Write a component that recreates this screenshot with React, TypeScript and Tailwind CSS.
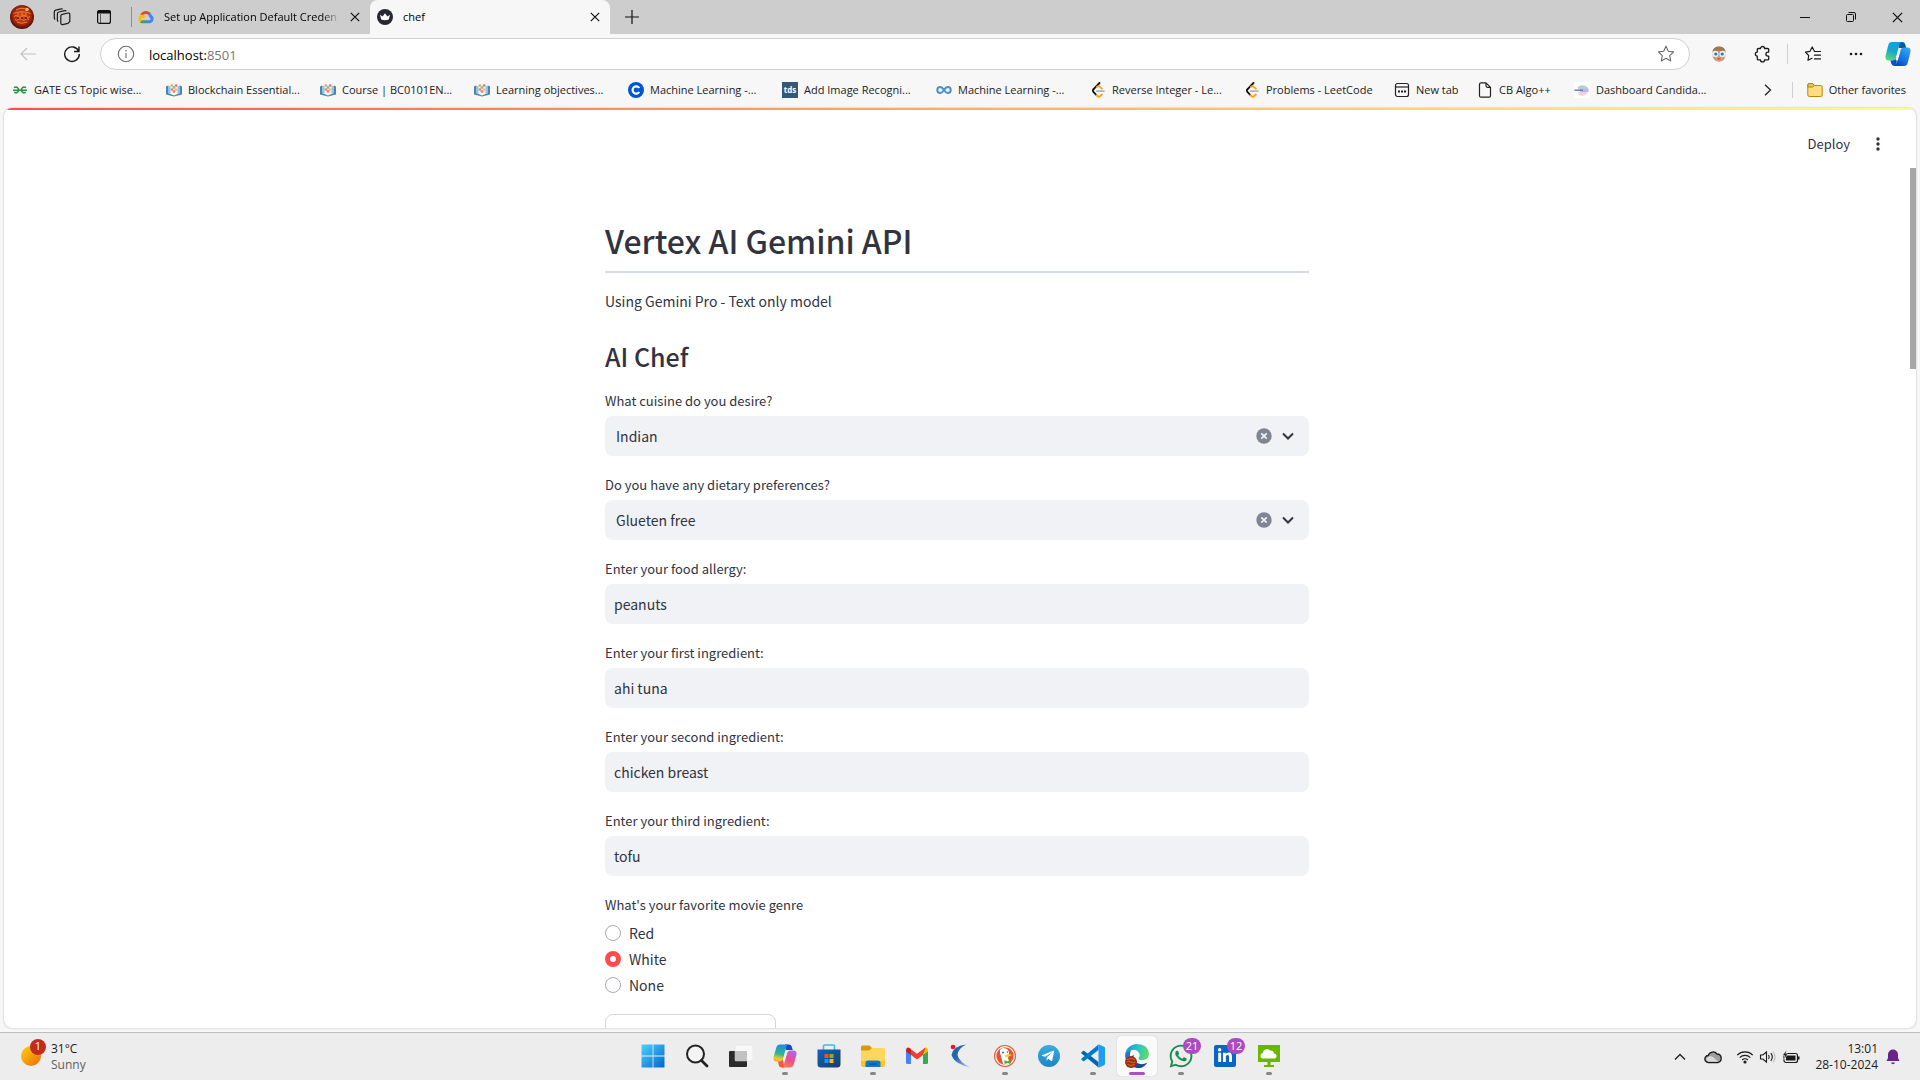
import React from "react";
import { FaWhatsapp, FaTelegramPlane, FaLinkedinIn } from "react-icons/fa";

const chromeFont = "font-['Open_Sans','Noto_Sans',sans-serif]";
const sourceFont = "font-['Noto_Sans_CJK_SC',sans-serif]";

/* ---------- browser glyphs ---------- */

function Avatar() {
  return (
    <svg viewBox="0 0 24 24" className="size-6">
      <defs>
        <radialGradient id="avatar" cx="50%" cy="45%" r="55%">
          <stop offset="0" stopColor="#d8481c" />
          <stop offset="0.65" stopColor="#a82a10" />
          <stop offset="1" stopColor="#4d0a08" />
        </radialGradient>
      </defs>
      <circle cx="12" cy="12" r="12" fill="url(#avatar)" />
      <g fill="none" stroke="#f28a35" strokeWidth="0.9">
        <path d="M6 5q6-3.500 12 0M3.500 8.500q8.500-3.500 17 0" />
        <path d="M4 11.500q2-2 4 0t4 0 4 0 4 0M5 14.500q1.700 1.800 3.500 0t3.500 0 3.500 0 3.500 0" />
        <path d="M8 8v3M12 7.500v3.500M16 8v3M7 17q5 2.500 10 0" />
      </g>
      <g fill="#571006">
        <circle cx="8" cy="13" r="1" />
        <circle cx="12" cy="13" r="1" />
        <circle cx="16" cy="13" r="1" />
      </g>
      <circle cx="17" cy="4.5" r="1.8" fill="#f5b44a" />
    </svg>
  );
}

function WorkspacesIcon() {
  return (
    <svg viewBox="0 0 18 18" className="size-[18px]" fill="none" stroke="#1a1a1a" strokeWidth="1.2" strokeLinejoin="round">
      <path d="M9.2 6.3 15 5a1.5 1.5 0 0 1 1.8 1.2v7.3L15 15.3 9.6 16.6a1.5 1.5 0 0 1-1.8-1.4V8a1.6 1.6 0 0 1 1.4-1.7Z" />
      <path d="M5.2 13.6A1.6 1.6 0 0 1 4.4 12V5.8A1.7 1.7 0 0 1 5.8 4l6-1.4a1.6 1.6 0 0 1 1.5.4" />
      <path d="M2.2 11.4A1.6 1.6 0 0 1 1.3 10V4a1.8 1.8 0 0 1 1.4-1.8L8.2.9a1.6 1.6 0 0 1 1.5.3" />
    </svg>
  );
}

function TabActionsIcon() {
  return (
    <svg viewBox="0 0 14 14" className="size-3.5" fill="none" stroke="#111" strokeWidth="1.2">
      <rect x="0.6" y="0.6" width="12.8" height="12.8" rx="2" />
      <path d="M.6 3V2.4A1.8 1.8 0 0 1 2.4.6h9.2a1.8 1.8 0 0 1 1.8 1.8V3H.6Z" fill="#111" />
      <path d="M3.500 4v9.4" strokeWidth="1" opacity="0.6" />
    </svg>
  );
}

function GoogleCloudIcon() {
  return (
    <svg viewBox="0 0 16 16" className="size-4" fill="none" strokeWidth="3">
      <path d="M3.6 6.2A4.7 4.7 0 0 1 11.4 5" stroke="#ea4335" />
      <path d="M11 4.7a4.6 4.6 0 0 1 1.5 2.6 2.9 2.9 0 0 1-.6 5.4H8" stroke="#4285f4" />
      <path d="M8.2 12.7H4.4a2.9 2.9 0 0 1-1.8-.6" stroke="#34a853" />
      <path d="M3 12.4a3 3 0 0 1 1.4-5.3c1 0 1.700.4 2.4 1.2" stroke="#fbbc05" />
    </svg>
  );
}

function StreamlitCrownIcon() {
  return (
    <svg viewBox="0 0 16 16" className="size-4">
      <circle cx="8" cy="8" r="8" fill="#262730" />
      <path d="M3 5.8 5.6 7.6 8 4.3l2.4 3.3L13 5.8l-1.2 4.8Q8 12 4.2 10.6Z" fill="#fff" />
    </svg>
  );
}

function CloseIcon({ size = "size-2.5" }: { size?: string }) {
  return (
    <svg viewBox="0 0 10 10" className={size} stroke="#111" strokeWidth="1.2">
      <path d="M.8.8 9.2 9.2M9.2.8.8 9.2" />
    </svg>
  );
}

function StarIcon() {
  return (
    <svg viewBox="0 0 18 18" className="size-[18px]" fill="none" stroke="#6b6b6b" strokeWidth="1.1" strokeLinejoin="round">
      <path d="m9 1.3 2.3 4.9 5.3.7-3.900 3.700 1 5.300L9 13.300 4.300 15.900l1-5.300L1.400 6.900l5.300-.7Z" />
    </svg>
  );
}

function MonkeyIcon() {
  return (
    <svg viewBox="0 0 16 16" className="size-4">
      <path d="M8 .5Q14.500.5 15 7.500 14 15.500 8 15.500T1 7.500Q1.500.5 8 .5Z" fill="#c08e68" />
      <path d="M1.500 5.500Q3 .5 8 .5t6.500 5Q8 3.500 1.500 5.500Z" fill="#a3764f" />
      <ellipse cx="8" cy="12.500" rx="4" ry="3" fill="#e09a7c" />
      <circle cx="4.300" cy="8" r="3.300" fill="#e3f0f5" />
      <circle cx="11.700" cy="8" r="3.300" fill="#e3f0f5" />
      <circle cx="4.800" cy="8" r="1.600" fill="#2f7fa3" />
      <circle cx="11.200" cy="8" r="1.600" fill="#2f7fa3" />
      <path d="M6.500 12.800h3" stroke="#a0473c" fill="none" />
    </svg>
  );
}

function ExtensionsIcon() {
  return (
    <svg viewBox="0 0 18 18" className="size-[18px]" fill="none" stroke="#1a1a1a" strokeWidth="1.3" strokeLinejoin="round">
      <path d="M6.500 3.500a2 2 0 0 1 4 0h3.200a1 1 0 0 1 1 1v2.600h-.8a2 2 0 0 0 0 4h.8v2.800a1 1 0 0 1-1 1h-3.200a2 2 0 0 1-4 0H4.300a1 1 0 0 1-1-1v-2.800a2 2 0 0 1 0-4V4.500a1 1 0 0 1 1-1Z" />
    </svg>
  );
}

function FavoritesIcon() {
  return (
    <svg viewBox="0 0 18 18" className="size-[18px]" fill="none" stroke="#1a1a1a" strokeWidth="1.2" strokeLinejoin="round" strokeLinecap="round">
      <path d="M10.500 6.500 8.200 2 6 6.300l-4.600.8L4.700 10.500 4 15.300l4-2" />
      <path d="M11 6.500h5.500M10.500 10.200h6M10.500 13.900h6" />
    </svg>
  );
}

function EdgeCopilotIcon() {
  return (
    <svg viewBox="0 0 24 24" className="size-[26px]">
      <defs>
        <linearGradient id="ecA" x1="0.6" y1="0" x2="0.3" y2="1">
          <stop offset="0" stopColor="#12a0e8" />
          <stop offset="0.5" stopColor="#16a8c8" />
          <stop offset="1" stopColor="#56d878" />
        </linearGradient>
        <linearGradient id="ecB" x1="0.8" y1="0" x2="0.2" y2="1">
          <stop offset="0" stopColor="#2fa8f7" />
          <stop offset="0.6" stopColor="#1671e0" />
          <stop offset="1" stopColor="#0a3fb5" />
        </linearGradient>
      </defs>
      <path d="M12 1h4q2 0 2.600 2l1 3.500H13Z" fill="#0b5a8f" />
      <path d="M6.500 1H16q-2 0-2.600 2L10.500 14q-1 4-4.500 4H3.500Q-.5 18 .7 13L3 4q.8-3 3.500-3Z" fill="url(#ecA)" />
      <path d="M17.500 23H8q2 0 2.600-2l2.900-11q1-4 4.500-4h2.500q4 0 2.800 5L21 20q-.8 3-3.500 3Z" fill="url(#ecB)" />
      <path d="M11 23H8.500q-2 0-2.600-2L5 18h1.500q3 0 4-3.500Z" fill="#0a50c0" />
      <path d="m13.300 8.500-2.500 9" stroke="#f7f7f7" strokeWidth="2.200" />
    </svg>
  );
}

/* ---------- bookmarks ---------- */

function PeopleBookIcon() {
  return (
    <svg viewBox="0 0 16 16" className="size-4 shrink-0">
      <path d="M0 4.500 2 3.500V11l6 2.500V14.500L0 12.500ZM16 4.500l-2-1V11l-6 2.500V14.500l8-2Z" fill="#4a87b0" />
      <path d="M2 3.500 4.500 4.500V12L2 11Z" fill="#8fc3e0" />
      <path d="M14 3.500 11.500 4.500V12l2.500-1Z" fill="#8fc3e0" />
      <circle cx="5.8" cy="3.500" r="1.300" fill="#f0a04b" />
      <circle cx="10.200" cy="3.500" r="1.300" fill="#e8705a" />
      <circle cx="8" cy="5.500" r="1.400" fill="#79c795" />
      <circle cx="6" cy="7.500" r="1.300" fill="#e47a8a" />
      <circle cx="10" cy="7.500" r="1.300" fill="#f2b58e" />
      <circle cx="8" cy="9.500" r="1.400" fill="#e98e58" />
    </svg>
  );
}

function GateIcon() {
  return (
    <svg viewBox="0 0 16 16" className="size-4 shrink-0" fill="none" stroke="#2f8d46" strokeWidth="1.500">
      <path d="M2 5.800A2.800 2.800 0 1 1 2.200 10.200M1 8.300H15M14 5.800A2.800 2.800 0 1 0 13.800 10.200" />
    </svg>
  );
}

function CourseCIcon() {
  return (
    <svg viewBox="0 0 16 16" className="size-4 shrink-0">
      <circle cx="8" cy="8" r="8" fill="#0056d2" />
      <path d="M11.200 10a3.600 3.600 0 1 1 0-4" stroke="#fff" strokeWidth="2.200" fill="none" />
    </svg>
  );
}

function TdsIcon() {
  return (
    <span className="flex size-4 shrink-0 items-center justify-center bg-[#355876] text-[8px] leading-none font-bold text-white">
      tds
    </span>
  );
}

function InfinityIcon() {
  return (
    <svg viewBox="0 0 16 16" className="size-4 shrink-0" fill="none" stroke="#4a8fd0" strokeWidth="2">
      <path d="M8 8C6.500 5.700 5.600 5 4.300 5a3 3 0 0 0 0 6C5.600 11 6.500 10.300 8 8s2.400-3 3.700-3a3 3 0 0 1 0 6C10.400 11 9.500 10.300 8 8Z" />
    </svg>
  );
}

function LeetIcon() {
  return (
    <svg viewBox="0 0 16 16" className="size-4 shrink-0" fill="none" strokeLinecap="round" strokeWidth="1.800">
      <path d="M9.500 1 3.400 7.300" stroke="#111" />
      <path d="M3.400 7.300a1.800 1.800 0 0 0 0 2.600l3 3.200" stroke="#111" />
      <path d="m6.400 13.100.9.900a2.200 2.200 0 0 0 3 0l1.600-1.500M6.900 4.800a2.200 2.200 0 0 1 3 0L11.800 6.700" stroke="#ffa116" />
      <path d="M6.800 9.200h7" stroke="#b3b3b3" />
    </svg>
  );
}

function NewTabIcon() {
  return (
    <svg viewBox="0 0 16 16" className="size-4 shrink-0" fill="none" stroke="#222" strokeWidth="1.200">
      <rect x="1.500" y="1.500" width="13" height="13" rx="2" />
      <path d="M1.500 5h13" />
      <path d="M4 9.500h8" strokeWidth="2" strokeDasharray="2 1" />
    </svg>
  );
}

function PageIcon() {
  return (
    <svg viewBox="0 0 16 16" className="size-4 shrink-0" fill="none" stroke="#222" strokeWidth="1.200" strokeLinejoin="round">
      <path d="M4 .8h5l4.500 4.500v8.400a1.500 1.500 0 0 1-1.500 1.500H4a1.500 1.500 0 0 1-1.500-1.500V2.300A1.500 1.500 0 0 1 4 .8ZM9 .8v3a1.500 1.500 0 0 0 1.500 1.500h3" />
    </svg>
  );
}

function SphereIcon() {
  return (
    <svg viewBox="0 0 16 16" className="size-4 shrink-0">
      <rect width="16" height="16" fill="#fff" />
      <path d="M4 5a6.500 6 0 0 1 10.500 2H4Z" fill="#b5cbd8" />
      <path d="M6 7h8.700a6 6 0 0 1-.5 3H6Z" fill="#c3b4dc" />
      <path d="M4 10h10a6.500 6.500 0 0 1-9 3Z" fill="#f0d0e0" />
      <path d="M0 7.500h9v1.500H1Z" fill="#6d7fa8" />
    </svg>
  );
}

function FolderIcon() {
  return (
    <svg viewBox="0 0 16 16" className="size-4 shrink-0" fill="#ffdc82" stroke="#b8860b" strokeWidth="1">
      <path d="M.8 3A1.500 1.500 0 0 1 2.300 1.500h3.400L7.500 3.500h6.200A1.500 1.500 0 0 1 15.200 5v8a1.500 1.500 0 0 1-1.500 1.500H2.300A1.500 1.500 0 0 1 .8 13Z" />
      <path d="M.8 3A1.500 1.500 0 0 1 2.300 1.500h3.400L7.500 3.500 5.700 5H.8Z" fill="#f0c23c" />
    </svg>
  );
}

const bookmarks = [
  { label: "GATE CS Topic wise...", icon: <GateIcon />, width: "w-[154px]" },
  { label: "Blockchain Essential...", icon: <PeopleBookIcon />, width: "w-[154px]" },
  { label: "Course | BC0101EN...", icon: <PeopleBookIcon />, width: "w-[154px]" },
  { label: "Learning objectives...", icon: <PeopleBookIcon />, width: "w-[154px]" },
  { label: "Machine Learning -...", icon: <CourseCIcon />, width: "w-[154px]" },
  { label: "Add Image Recogni...", icon: <TdsIcon />, width: "w-[154px]" },
  { label: "Machine Learning -...", icon: <InfinityIcon />, width: "w-[154px]" },
  { label: "Reverse Integer - Le...", icon: <LeetIcon />, width: "w-[154px]" },
  { label: "Problems - LeetCode", icon: <LeetIcon />, width: "w-[150px]" },
  { label: "New tab", icon: <NewTabIcon />, width: "w-[83px]" },
  { label: "CB Algo++", icon: <PageIcon />, width: "w-[97px]" },
  { label: "Dashboard Candida...", icon: <SphereIcon />, width: "w-[154px]" },
];

function IconButton({ label, width = "w-11", children }: { label: string; width?: string; children: React.ReactNode }) {
  return (
    <button aria-label={label} className={`flex h-full shrink-0 items-center justify-center ${width}`}>
      {children}
    </button>
  );
}

function TabStrip() {
  return (
    <div className="flex h-[34px] items-center bg-[#cdcdcd] text-[11px] text-black">
      <IconButton label="Profile">
        <Avatar />
      </IconButton>
      <IconButton label="Workspaces" width="w-9">
        <WorkspacesIcon />
      </IconButton>
      <IconButton label="Tab actions" width="w-12">
        <TabActionsIcon />
      </IconButton>
      <div className="ml-[3px] h-5 w-px bg-[#8f8f8f]" />
      <div className="flex h-full w-[238px] items-center gap-2.5 pr-2.5 pl-1.5">
        <GoogleCloudIcon />
        <span className="flex-1 whitespace-nowrap mask-r-from-90%">Set up Application Default Creden</span>
        <button aria-label="Close tab">
          <CloseIcon />
        </button>
      </div>
      <div className="flex h-full w-60 items-center gap-2.5 rounded-t-lg bg-[#f7f7f7] pr-2.5 pl-[7px]">
        <StreamlitCrownIcon />
        <span className="flex-1">chef</span>
        <button aria-label="Close tab">
          <CloseIcon />
        </button>
      </div>
      <IconButton label="New tab">
        <svg viewBox="0 0 14 14" className="size-3.5" stroke="#111" strokeWidth="1.200">
          <path d="M7 0v14M0 7h14" />
        </svg>
      </IconButton>
      <div className="flex-1" />
      <IconButton label="Minimize" width="w-[46px]">
        <svg viewBox="0 0 10 10" className="size-2.5" stroke="#111">
          <path d="M0 5.500h10" />
        </svg>
      </IconButton>
      <IconButton label="Restore" width="w-[46px]">
        <svg viewBox="0 0 10 10" className="size-2.5" stroke="#111" fill="none">
          <rect x="0.500" y="2.500" width="7" height="7" rx="1" />
          <path d="M2.500.5H8A1.500 1.500 0 0 1 9.500 2v5.500" />
        </svg>
      </IconButton>
      <IconButton label="Close" width="w-[46px]">
        <CloseIcon size="size-[11px]" />
      </IconButton>
    </div>
  );
}

function AddressBar() {
  return (
    <div className="flex h-10 items-center">
      <IconButton label="Back" width="ml-1.5 w-11">
        <svg viewBox="0 0 16 14" className="h-3.5 w-4" fill="none" stroke="#c3c3c3" strokeWidth="1.200">
          <path d="M16 7H1M7 1 1 7l6 6" />
        </svg>
      </IconButton>
      <IconButton label="Refresh">
        <svg viewBox="0 0 18 18" className="size-[18px]" fill="none" stroke="#1a1a1a" strokeWidth="1.400">
          <path d="M15.800 6.500A7.300 7.300 0 1 0 16.300 9M16 1.500v5h-5" />
        </svg>
      </IconButton>
      <div className="ml-1.5 flex h-8 flex-1 items-center rounded-full border border-[#d0d0d0] bg-white pr-3.5 pl-4">
        <svg viewBox="0 0 18 18" className="size-[18px]" fill="none" stroke="#6b6b6b" strokeWidth="1.100">
          <circle cx="9" cy="9" r="7.700" />
          <path d="M9 8v5M9 5v1.500" />
        </svg>
        <div className="relative ml-3.5 h-5 flex-1">
          <input aria-label="Address" className="h-5 w-full bg-transparent text-[13px] outline-none" />
          <span className="pointer-events-none absolute inset-x-0 top-px text-[13px] leading-5 text-black">
            localhost:<span className="text-[#767676]">8501</span>
          </span>
        </div>
        <button aria-label="Add to favorites">
          <StarIcon />
        </button>
      </div>
      <div className="ml-[7px] flex h-full items-center">
        <IconButton label="Profile extension">
          <MonkeyIcon />
        </IconButton>
        <IconButton label="Extensions">
          <ExtensionsIcon />
        </IconButton>
        <div className="ml-0.5 h-5 w-px bg-[#cfcfcf]" />
        <IconButton label="Favorites" width="w-[50px]">
          <FavoritesIcon />
        </IconButton>
        <IconButton label="Settings and more" width="w-9">
          <svg viewBox="0 0 14 4" className="h-1 w-3.5" fill="#1a1a1a">
            <circle cx="2" cy="2" r="1.300" />
            <circle cx="7" cy="2" r="1.300" />
            <circle cx="12" cy="2" r="1.300" />
          </svg>
        </IconButton>
        <IconButton label="Copilot" width="ml-0.5 w-11">
          <EdgeCopilotIcon />
        </IconButton>
      </div>
    </div>
  );
}

function BookmarksBar() {
  return (
    <div className="flex h-[34px] items-center pb-0.5 pl-3 text-[11px] whitespace-nowrap text-[#1b1b1b]">
      {bookmarks.map((b, i) => (
        <a key={i} href="#" className={`flex shrink-0 items-center gap-1.5 ${b.width}`}>
          {b.icon}
          <span>{b.label}</span>
        </a>
      ))}
      <div className="flex-1" />
      <button aria-label="More favorites" className="mr-5">
        <svg viewBox="0 0 8 12" className="h-3 w-2" fill="none" stroke="#222" strokeWidth="1.300">
          <path d="m1 .8 5.500 5.200L1 11.200" />
        </svg>
      </button>
      <div className="mr-3.5 h-4 w-px bg-[#cfcfcf]" />
      <a href="#" className="mr-3.5 flex items-center gap-1.5">
        <FolderIcon />
        <span>Other favorites</span>
      </a>
    </div>
  );
}

/* ---------- app page ---------- */

const labelClass = "block h-[25px] text-[13px] leading-5";

function SelectField({ id, label, value, options }: { id: string; label: string; value: string; options: string[] }) {
  return (
    <div className="mb-[19px]">
      <label htmlFor={id} className={labelClass}>
        {label}
      </label>
      <div className="flex h-10 items-center rounded-lg bg-[#f0f2f6] pr-[13px]">
        <select id={id} defaultValue={value} className="h-full flex-1 appearance-none bg-transparent pl-[11px] text-sm outline-none">
          {options.map((o) => (
            <option key={o}>{o}</option>
          ))}
        </select>
        <button aria-label="Clear value" className="mr-2">
          <svg viewBox="0 0 16 16" className="size-4">
            <circle cx="8" cy="8" r="7.700" fill="#808495" />
            <path d="m5.300 5.300 5.400 5.400M10.700 5.300l-5.400 5.400" stroke="#f0f2f6" strokeWidth="1.800" />
          </svg>
        </button>
        <svg viewBox="0 0 16 16" className="size-4" fill="none" stroke="#31333f" strokeWidth="2">
          <path d="m3 5.500 5 5 5-5" />
        </svg>
      </div>
    </div>
  );
}

function TextField({ id, label, value }: { id: string; label: string; value: string }) {
  return (
    <div className="mb-[19px]">
      <label htmlFor={id} className={labelClass}>
        {label}
      </label>
      <input id={id} defaultValue={value} className="block h-10 w-full rounded-lg bg-[#f0f2f6] px-[9px] text-sm outline-none" />
    </div>
  );
}

function AppPage() {
  return (
    <main className={`mx-1 flex min-h-0 flex-1 flex-col overflow-hidden rounded-lg bg-white text-[#31333f] shadow-[0_0_2px_rgba(0,0,0,0.3)] ${sourceFont}`}>
      <div className="h-0.5 shrink-0 bg-linear-to-r from-[#ff4b4b] to-[#fffd80]" />
      <header className="flex h-[58px] shrink-0 items-center justify-end pt-2.5 pr-9 text-[13px]">
        <button className="leading-5">Deploy</button>
        <button aria-label="Main menu" className="ml-[26px]">
          <svg viewBox="0 0 4 14" className="h-3.5 w-1" fill="#31333f">
            <circle cx="2" cy="2" r="1.700" />
            <circle cx="2" cy="7" r="1.700" />
            <circle cx="2" cy="12" r="1.700" />
          </svg>
        </button>
      </header>
      <div className="flex min-h-0 flex-1">
        <div className="min-w-0 flex-1 overflow-hidden">
          <div className="mx-auto max-w-[704px] pt-12">
            <h1 className="border-b-2 border-[#d5dae5] pb-1.5 text-[32px] leading-[49px] font-medium">Vertex AI Gemini API</h1>
            <p className="mt-4 text-sm leading-6">Using Gemini Pro - Text only model</p>
            <h2 className="mt-6 mb-4 text-[25px] leading-[38px] font-medium">AI Chef</h2>
            <SelectField id="cuisine" label="What cuisine do you desire?" value="Indian" options={["Indian", "Italian", "American", "Chinese"]} />
            <SelectField id="diet" label="Do you have any dietary preferences?" value="Glueten free" options={["Glueten free", "Vegan", "Keto", "None"]} />
            <TextField id="allergy" label="Enter your food allergy:" value="peanuts" />
            <TextField id="ing1" label="Enter your first ingredient:" value="ahi tuna" />
            <TextField id="ing2" label="Enter your second ingredient:" value="chicken breast" />
            <TextField id="ing3" label="Enter your third ingredient:" value="tofu" />
            <fieldset>
              <legend className={labelClass}>What's your favorite movie genre</legend>
              {["Red", "White", "None"].map((o) => (
                <label key={o} className="flex h-[26px] items-center gap-2 text-sm">
                  <input
                    type="radio"
                    name="genre"
                    defaultChecked={o === "White"}
                    className="size-4 appearance-none rounded-full border border-[#a9abb3] bg-white checked:border-5 checked:border-[#ff4b4b]"
                  />
                  {o}
                </label>
              ))}
            </fieldset>
            <button className="mt-4 h-10 rounded-lg border border-[#d6d6d9] px-4 text-sm">Generate my recipes.</button>
          </div>
        </div>
        <div className="w-1.5">
          <div className="h-[201px] w-1.5 bg-[#a6a6a6]" />
        </div>
      </div>
    </main>
  );
}

/* ---------- taskbar ---------- */

function StartIcon() {
  return (
    <svg viewBox="0 0 24 24" className="size-6">
      <defs>
        <linearGradient id="win" x1="0" y1="0" x2="1" y2="1">
          <stop offset="0" stopColor="#4fd0ff" />
          <stop offset="1" stopColor="#0069c9" />
        </linearGradient>
      </defs>
      <path d="M.5.500H11.600V11.600H.5ZM12.400.5H23.500V11.600H12.400ZM.5 12.400H11.600V23.500H.5ZM12.400 12.400H23.500V23.500H12.400Z" fill="url(#win)" />
    </svg>
  );
}

function SearchIcon() {
  return (
    <svg viewBox="0 0 24 24" className="size-6" fill="none" stroke="#222">
      <circle cx="10.500" cy="10" r="8.500" strokeWidth="2" fill="#f4f4f4" />
      <path d="m16.500 16.500 5.500 5.500" strokeWidth="2.800" strokeLinecap="round" />
    </svg>
  );
}

function TaskViewIcon() {
  return (
    <svg viewBox="0 0 24 24" className="size-6">
      <rect x="0" y="7" width="18" height="16" rx="1" fill="#2b2b2b" />
      <rect x="6" y="1" width="18" height="16" rx="1" fill="#f8f8f8" stroke="#ddd" strokeWidth="0.500" />
      <rect x="6" y="7" width="12" height="10" fill="#c2c2c2" />
    </svg>
  );
}

function CopilotIcon() {
  return (
    <svg viewBox="0 0 24 24" className="size-6">
      <defs>
        <linearGradient id="cpA" x1="0.5" y1="0" x2="0.3" y2="1">
          <stop offset="0" stopColor="#1f8bea" />
          <stop offset="0.55" stopColor="#2fb88a" />
          <stop offset="0.85" stopColor="#f3cc2f" />
          <stop offset="1" stopColor="#f7a02a" />
        </linearGradient>
        <linearGradient id="cpB" x1="0.7" y1="0" x2="0.2" y2="1">
          <stop offset="0" stopColor="#b165ec" />
          <stop offset="0.5" stopColor="#e8508d" />
          <stop offset="1" stopColor="#ff8050" />
        </linearGradient>
      </defs>
      <path d="M12 .5h4q2 0 2.700 2l1 3.500H13Z" fill="#1b46c4" />
      <path d="M7 .5h9q-2 0-2.600 2L10.500 13.500q-1 4-4.500 4H3.500Q-.5 17.500.7 12.500l2.600-9Q4.200.5 7 .5Z" fill="url(#cpA)" />
      <path d="M17 23.500H8q2 0 2.600-2l2.900-11q1-4 4.500-4h2.500q4 0 2.800 5l-2.600 9q-.9 3-3.700 3Z" fill="url(#cpB)" />
      <path d="M11 23.500H8.500q-2 0-2.600-2L5 17.500h1q3 0 4.200-3Z" fill="#f35a3c" />
      <path d="m13.300 8-2.600 9" stroke="#ededed" strokeWidth="2.200" />
    </svg>
  );
}

function StoreIcon() {
  return (
    <svg viewBox="0 0 24 24" className="size-6">
      <defs>
        <linearGradient id="store" x1="0" y1="0" x2="1" y2="1">
          <stop offset="0" stopColor="#0f66b8" />
          <stop offset="1" stopColor="#1d3a6b" />
        </linearGradient>
      </defs>
      <path d="M6.500 6V2q0-1 1-1h9q1 0 1 1v4" stroke="#39bdf0" strokeWidth="1.600" fill="none" />
      <path d="M.5 5.500h23V20a3.500 3.500 0 0 1-3.500 3.500H4A3.500 3.500 0 0 1 .5 20Z" fill="url(#store)" />
      <path d="M7.500 10h4v4h-4Z" fill="#f25022" />
      <path d="M12.500 10h4v4h-4Z" fill="#7fba00" />
      <path d="M7.500 15h4v4h-4Z" fill="#00a4ef" />
      <path d="M12.500 15h4v4h-4Z" fill="#ffb900" />
    </svg>
  );
}

function ExplorerIcon() {
  return (
    <svg viewBox="0 0 24 24" className="size-6">
      <path d="M0 3q0-1.500 1.500-1.500h7L11 4v5H0Z" fill="#d69a10" />
      <path d="M0 6.500h8L11 4h11.500Q24 4 24 5.500V22H0Z" fill="#ffd65c" />
      <path d="M0 17h24v4q0 2-2 2H2q-2 0-2-2Z" fill="#fcc12d" />
      <path d="M4.500 23v-4q0-2.500 2.500-2.500h10q2.500 0 2.500 2.500v4Z" fill="#1376c8" />
      <path d="M8 19.500h8v1.200H8Z" fill="#0a4f94" />
    </svg>
  );
}

function GmailIcon() {
  return (
    <svg viewBox="0 0 24 24" className="size-6">
      <path d="M1 6v12.500Q1 20 2.500 20H6V9.500Z" fill="#4285f4" />
      <path d="M23 6v12.500q0 1.500-1.500 1.500H18V9.500Z" fill="#34a853" />
      <path d="M1 6.500Q1 3.500 3.500 3.500L6 5v6L1 7.500Z" fill="#c5221f" />
      <path d="M23 6.500q0-3-2.500-3L18 5v6l5-3.500Z" fill="#fbbc04" />
      <path d="m3.500 3.500 8.500 6.300 8.500-6.300L18 11l-6 4.500L6 11V5Z" fill="#ea4335" />
    </svg>
  );
}

function CrescentIcon() {
  return (
    <svg viewBox="0 0 24 24" className="size-6">
      <defs>
        <linearGradient id="crescent" x1="0" y1="0" x2="1" y2="1">
          <stop offset="0.4" stopColor="#1f66b3" />
          <stop offset="1" stopColor="#b9cfe6" />
        </linearGradient>
      </defs>
      <path d="M17 .5Q4 2 2.500 11q3 9 19 12.500Q10 18 8.500 11q0-6 8.500-10.500Z" fill="url(#crescent)" />
      <circle cx="4" cy="3" r="2.300" fill="#f0131d" />
    </svg>
  );
}

function DuckIcon() {
  return (
    <svg viewBox="0 0 24 24" className="size-6">
      <circle cx="12" cy="12" r="11" fill="#de5833" />
      <circle cx="12" cy="12" r="9.300" fill="none" stroke="#fff" strokeWidth="1.200" />
      <path d="M7 6q2-3 6-1.500 3.500 1.500 3 5.500l-1 4 2 6q-4 1.500-7 0L8 12Q6.500 8.500 7 6Z" fill="#fff" />
      <path d="M12 11q4-1.500 7 0-2 1.500-5 2-2.500 0-2-2Z" fill="#fdd20a" />
      <path d="m11.500 16 3 1.500 3-1.500v4l-3-1-3 1Z" fill="#41ad3c" />
      <circle cx="10" cy="8.500" r="0.900" fill="#2d4f8e" />
      <circle cx="14.500" cy="8" r="0.800" fill="#2d4f8e" />
    </svg>
  );
}

function TelegramIcon() {
  return (
    <span className="flex size-[22px] items-center justify-center rounded-full bg-linear-to-b from-[#37aee2] to-[#1e86be] pr-0.5 text-white">
      <FaTelegramPlane size={14} />
    </span>
  );
}

function VsCodeIcon() {
  return (
    <svg viewBox="0 0 24 24" className="size-6">
      <path d="M.5 8.300 2 7q.6-.5 1.300 0L17.500 18v5.500L.6 9.500q-.6-.6-.1-1.200Z" fill="#0065a9" />
      <path d="M.5 15.700 2 17q.6.500 1.300 0L17.500 6V.5L.6 14.500q-.6.600-.1 1.200Z" fill="#007acc" />
      <path d="m17.500.3 5.600 2.500q.9.400.9 1.400v15.600q0 1-.9 1.400l-5.600 2.500Z" fill="#1f9cf0" />
    </svg>
  );
}

function EdgeIcon() {
  return (
    <svg viewBox="0 0 24 24" className="size-6">
      <defs>
        <linearGradient id="edgeTop" x1="0" y1="0.3" x2="1" y2="0.5">
          <stop offset="0" stopColor="#1c93d6" />
          <stop offset="0.5" stopColor="#2bc3c6" />
          <stop offset="1" stopColor="#63dc68" />
        </linearGradient>
      </defs>
      <path d="M0 12A12 12 0 0 1 12 0q11 0 12 10-.5 6-7 6-4 0-3.500-2 2-2 1-4Q12 5 7 6 2 7 0 12Z" fill="url(#edgeTop)" />
      <path d="M0 12q1.500-5 6-6-2 4 0 10 3 7 10 7.500Q13 24 12 24 1 23 0 12Z" fill="#1878cf" />
      <path d="M9 11q-2 5 3 8 5 2.500 10.500-.5Q18 25 12 24 5 21 6 14q1-3 3-3Z" fill="#164a94" />
      <circle cx="6" cy="18" r="6" fill="#9c2f12" />
      <path d="M2 15.500q4-2 8 0M1.500 18q2-1.500 4.500 0t4.500 0M2.500 20.500q3.500 2 7 0" stroke="#e07a3a" strokeWidth="0.8" fill="none" />
    </svg>
  );
}

function MonitorIcon() {
  return (
    <svg viewBox="0 0 24 24" className="size-6">
      <path d="M1 1h22v17H1ZM10.500 18h3v3h3.500v2H7v-2h3.500Z" fill="#6bb700" />
      <path d="M5.500 14.500a2.800 2.800 0 0 1 .3-5.500 4 4 0 0 1 7-2.500A3.500 3.500 0 0 1 17 9.500a2.600 2.600 0 0 1 1 5Z" fill="#fff" />
    </svg>
  );
}

type TaskApp = { name: string; icon: React.ReactNode; state?: "open" | "active"; badge?: string };

const apps: TaskApp[] = [
  { name: "Start", icon: <StartIcon /> },
  { name: "Search", icon: <SearchIcon /> },
  { name: "Task view", icon: <TaskViewIcon /> },
  { name: "Copilot", icon: <CopilotIcon />, state: "open" },
  { name: "Microsoft Store", icon: <StoreIcon /> },
  { name: "File Explorer", icon: <ExplorerIcon />, state: "open" },
  { name: "Gmail", icon: <GmailIcon /> },
  { name: "Learning portal", icon: <CrescentIcon /> },
  { name: "DuckDuckGo", icon: <DuckIcon />, state: "open" },
  { name: "Telegram", icon: <TelegramIcon /> },
  { name: "Visual Studio Code", icon: <VsCodeIcon />, state: "open" },
  { name: "Microsoft Edge", icon: <EdgeIcon />, state: "active" },
  { name: "WhatsApp", icon: <FaWhatsapp size={26} color="#1e8a55" />, state: "open", badge: "21" },
  {
    name: "LinkedIn",
    icon: (
      <span className="flex size-[22px] items-center justify-center rounded-xs bg-[#0a66c2] text-white">
        <FaLinkedinIn size={16} />
      </span>
    ),
    badge: "12",
  },
  { name: "Remote desktop", icon: <MonitorIcon />, state: "open" },
];

function Taskbar() {
  return (
    <footer className="mt-1 grid h-12 shrink-0 grid-cols-[1fr_auto_1fr] border-t border-[#bdbdbd] bg-[#ededed] text-xs text-[#1b1b1b]">
      <button className="flex items-center gap-[7px] justify-self-start pl-5 text-left">
        <span className="relative">
          <svg viewBox="0 0 24 24" className="size-6">
            <defs>
              <linearGradient id="sun" x1="0" y1="0" x2="1" y2="1">
                <stop offset="0" stopColor="#fcd20c" />
                <stop offset="1" stopColor="#ee6a0c" />
              </linearGradient>
            </defs>
            <circle cx="11" cy="11" r="10" fill="url(#sun)" />
          </svg>
          <span className="absolute -top-1.5 -right-0.5 flex size-4 items-center justify-center rounded-full bg-[#c42b1c] text-[11px] text-white">
            1
          </span>
        </span>
        <span className="leading-4">
          31°C
          <br />
          <span className="text-[#616161]">Sunny</span>
        </span>
      </button>
      <nav className="flex items-center gap-1 pb-px pl-0.5">
        {apps.map((app) => (
          <button
            key={app.name}
            aria-label={app.name}
            className={`relative flex size-10 items-center justify-center rounded ${
              app.state === "active" ? "bg-[#fafafa] shadow-[0_0_1px_rgba(0,0,0,0.3)]" : ""
            }`}
          >
            {app.icon}
            {app.badge && (
              <span className="absolute top-0.5 right-0 flex h-4 w-[18px] items-center justify-center rounded-full bg-[#aa4bc0] text-[11px] text-white">
                {app.badge}
              </span>
            )}
            {app.state === "open" && <span className="absolute bottom-px h-[3px] w-1.5 rounded-full bg-[#878787]" />}
            {app.state === "active" && <span className="absolute bottom-px h-[3px] w-4 rounded-full bg-[#ab4fc3]" />}
          </button>
        ))}
      </nav>
      <div className="flex items-center justify-self-end pr-5">
        <button aria-label="Show hidden icons" className="mr-[18px]">
          <svg viewBox="0 0 12 8" className="h-2 w-3" fill="none" stroke="#222" strokeWidth="1.400">
            <path d="m1 6.500 5-5 5 5" />
          </svg>
        </button>
        <svg viewBox="0 0 18 14" className="mr-3.5 h-3.5 w-[18px]" stroke="#1a1a1a" strokeWidth="1.300">
          <path d="M4.500 12.500a3.500 3.500 0 0 1-.3-7A5 5 0 0 1 13 4a4.300 4.300 0 0 1 .8 8.500Z" fill="#9f9f9f" />
          <path d="M4.500 6.500q3-1 5 1l5 4.300q-1 0-2 0h-8q-2.500-1-2.300-3Z" fill="#dadada" stroke="none" />
        </svg>
        <svg viewBox="0 0 18 14" className="mr-[5px] h-3.5 w-[18px]" fill="none" stroke="#1a1a1a" strokeWidth="1.200">
          <path d="M1.200 5.200a11 11 0 0 1 15.600 0M3.700 7.600a7.500 7.500 0 0 1 10.600 0M6.200 10a4 4 0 0 1 5.600 0" />
          <circle cx="9" cy="12" r="1" fill="#1a1a1a" />
        </svg>
        <svg viewBox="0 0 18 14" className="mr-[5px] h-3.5 w-[18px]" fill="none" stroke="#1a1a1a" strokeWidth="1.100">
          <path d="M1.500 5h2.300L7.500 2v10L3.800 9H1.500ZM9.500 5q1.500 2 0 4M11.800 3.200q3 3.800 0 7.600" />
          <path d="M14 1.500q4 5.500 0 11" stroke="#bbb" />
        </svg>
        <svg viewBox="0 0 18 14" className="h-3.5 w-[18px]">
          <rect x="2" y="3.500" width="13.500" height="9" rx="2" fill="none" stroke="#1a1a1a" strokeWidth="1.200" />
          <rect x="4" y="5.500" width="9.500" height="5" fill="#1a1a1a" />
          <path d="M16 6.500h1.500v3H16Z" fill="#1a1a1a" />
          <path d="M4.500 0 .5 5.500h2.200L2 9.500l4-5.500H3.800Z" fill="#1a1a1a" stroke="#ededed" strokeWidth="0.6" />
        </svg>
        <button className="w-[78px] text-right leading-4">
          13:01
          <br />
          28-10-2024
        </button>
        <svg viewBox="0 0 14 16" className="ml-2 h-4 w-3.5 shrink-0" fill="#6b2385">
          <path d="M7 .5a5 5 0 0 1 5 5V9l1.500 3H.5L2 9V5.500a5 5 0 0 1 5-5ZM5 13.500h4q-.5 1.700-2 1.700t-2-1.700Z" />
        </svg>
      </div>
    </footer>
  );
}

export default function App() {
  return (
    <div className={`flex h-screen flex-col overflow-hidden bg-[#f7f7f7] ${chromeFont}`}>
      <TabStrip />
      <AddressBar />
      <BookmarksBar />
      <AppPage />
      <Taskbar />
    </div>
  );
}
